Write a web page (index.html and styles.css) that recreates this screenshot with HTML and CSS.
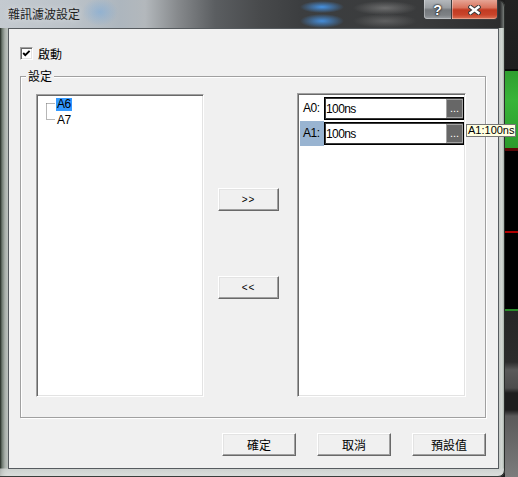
FILE: index.html
```html
<!DOCTYPE html>
<html>
<head>
<meta charset="utf-8">
<link rel="stylesheet" href="styles.css">
</head>
<body>
<div class="screen">
  <div class="window">
    <div class="titlebar">
      <span class="title">雜訊濾波設定</span>
      <div class="caption-buttons">
        <span class="cap-btn help">?</span>
        <span class="cap-btn close">
          <svg width="13" height="10" viewBox="0 0 13 10">
            <path d="M2.5 2 L10.5 8 M10.5 2 L2.5 8" stroke="#3a3a3a" stroke-width="4.4" stroke-linecap="square" fill="none"/>
            <path d="M2.5 2 L10.5 8 M10.5 2 L2.5 8" stroke="#ffffff" stroke-width="2.4" stroke-linecap="square" fill="none"/>
          </svg>
        </span>
      </div>
    </div>
    <div class="frame-body">
      <div class="client">
        <div class="check-row">
          <span class="checkbox">
            <svg width="11" height="11" viewBox="0 0 11 11">
              <path d="M2.2 5 L4.3 7.1 L8.6 2.8" stroke="#000" stroke-width="1.9" fill="none"/>
            </svg>
          </span>
          <span class="cjk check-label">啟動</span>
        </div>
        <div class="group">
          <span class="cjk group-label">設定</span>
          <div class="tree">
            <svg class="tree-lines" width="18" height="32" viewBox="0 0 18 32">
              <path d="M8.5 6.5 V22.5 M8.5 6.5 H17 M8.5 22.5 H17" stroke="#6e6e6e" stroke-width="1" stroke-dasharray="1 1" fill="none"/>
            </svg>
            <div class="tree-nodes">
              <div class="node"><span class="node-text selected">A6</span></div>
              <div class="node"><span class="node-text">A7</span></div>
            </div>
          </div>
          <div class="mid">
            <button class="btn btn-move">&gt;&gt;</button>
            <button class="btn btn-move">&lt;&lt;</button>
          </div>
          <div class="list">
            <div class="row">
              <span class="row-label">A0:</span>
              <div class="edit"><span class="edit-text">100ns</span><span class="dots">...</span></div>
            </div>
            <div class="row active">
              <span class="row-label">A1:</span>
              <div class="edit"><span class="edit-text">100ns</span><span class="dots">...</span></div>
              <span class="tooltip">A1:100ns</span>
            </div>
          </div>
        </div>
        <div class="footer">
          <button class="btn btn-footer cjk">確定</button>
          <button class="btn btn-footer cjk">取消</button>
          <button class="btn btn-footer cjk">預設值</button>
        </div>
      </div>
    </div>
  </div>
  <div class="backdrop"></div>
</div>
</body>
</html>
```

FILE: styles.css
```css
html, body {
  margin: 0;
  padding: 0;
  background: #1e1e1e;
  overflow: hidden;
}

body {
  font-family: "Liberation Sans", "Noto Sans CJK TC", sans-serif;
  font-size: 12px;
  color: #000;
}

.cjk {
  font-family: "Noto Sans CJK TC", "Liberation Sans", sans-serif;
  font-size: 12px;
}

.screen {
  display: flex;
  width: 518px;
  height: 477px;
}

.window {
  width: 505px;
  height: 477px;
  flex: none;
  display: flex;
  flex-direction: column;
  position: relative;
  z-index: 1;
}

.titlebar {
  height: 28px;
  flex: none;
  display: flex;
  align-items: flex-start;
  padding: 0 7px 0 8px;
  border-radius: 0 7px 0 0;
  box-shadow: inset -1px 0 0 #2a2d2b;
  background:
    radial-gradient(22px 6px at 322px 7px, rgba(70, 150, 235, 0.95), rgba(70, 150, 235, 0)),
    radial-gradient(22px 7px at 322px 21px, rgba(70, 150, 235, 0.9), rgba(70, 150, 235, 0)),
    radial-gradient(32px 7px at 385px 8px, rgba(150, 150, 150, 0.55), rgba(150, 150, 150, 0)),
    radial-gradient(32px 7px at 385px 21px, rgba(140, 140, 140, 0.45), rgba(140, 140, 140, 0)),
    radial-gradient(18px 14px at 100px 12px, rgba(120, 170, 220, 0.55), rgba(120, 170, 220, 0)),
    linear-gradient(to right, #c4cad0 0, #bcc3c9 70px, #adb6be 120px, #b3b8bc 145px, #86898c 178px, #5b5e61 215px, #484a4c 260px, #3c3e40 300px, #3a3b3c 420px, #2c2d2e 500px, #8a908c 505px);
}

.title {
  margin-top: 7px;
  line-height: 14px;
  font-family: "Noto Sans CJK TC", sans-serif;
  font-size: 12px;
  color: #1c1c1c;
  text-shadow: 0 0 6px rgba(255, 255, 255, 0.6);
}

.caption-buttons {
  margin-left: auto;
  display: flex;
  height: 20px;
}

.cap-btn {
  box-sizing: border-box;
  height: 20px;
  display: flex;
  align-items: center;
  justify-content: center;
  border: 1px solid #3a3c3e;
  border-top: none;
}

.help {
  width: 28px;
  border-radius: 0 0 0 4px;
  border-right: none;
  background: linear-gradient(to bottom, #b4b8bc 0, #9a9ea2 40%, #74787c 52%, #7e8286 80%, #9ea2a6 100%);
  box-shadow: inset 1px 0 0 rgba(255, 255, 255, 0.35), inset 0 -1px 0 rgba(255, 255, 255, 0.3);
  color: #fff;
  font-family: "Liberation Sans", sans-serif;
  font-weight: bold;
  font-size: 14px;
  line-height: 14px;
  text-shadow: 0 0 1px #222, 0 0 2px #222, 0 0 2px #333;
}

.close {
  width: 47px;
  border-radius: 0 0 4px 0;
  background: linear-gradient(to bottom, #e6a595 0, #d9735d 40%, #c23b22 52%, #c9442a 78%, #dc7358 100%);
  box-shadow: inset 1px 0 0 rgba(255, 255, 255, 0.35), inset 0 -1px 0 rgba(255, 220, 200, 0.4);
}

.close svg {
  display: block;
}

.frame-body {
  flex: 1;
  display: flex;
  padding: 0 6px 8px 8px;
  border-radius: 0 0 7px 0;
  box-shadow: inset -1px 0 0 #2a2d2b, inset 0 -1px 0 #3a3d3b;
  background:
    linear-gradient(to bottom, rgba(255, 255, 255, 0) 0, rgba(255, 255, 255, 0) 440px, rgba(210, 214, 212, 0.8) 441px, rgba(225, 228, 226, 0.8) 448px),
    linear-gradient(to right, #1f2720 0, #6d786f 2px, #a9b0ab 5px, #bcc2be 8px, #c3c8c5 calc(100% - 6px), #d3d9d4 calc(100% - 3px), #8e9991 100%);
}

.client {
  flex: 1;
  box-sizing: border-box;
  display: flex;
  flex-direction: column;
  background: #f0f0f0;
  border: 1px solid #565b5f;
}

.check-row {
  display: flex;
  align-items: center;
  gap: 5px;
  margin: 18px 0 0 11px;
  height: 13px;
}

.checkbox {
  box-sizing: border-box;
  width: 13px;
  height: 13px;
  background: #fff;
  border: 1px solid;
  border-color: #a0a0a0 #ffffff #ffffff #a0a0a0;
  box-shadow: inset 1px 1px 0 #696969, inset -1px -1px 0 #e3e3e3;
  display: flex;
  align-items: center;
  justify-content: center;
}

.checkbox svg {
  display: block;
}

.check-label {
  line-height: 13px;
}

.group {
  position: relative;
  box-sizing: border-box;
  width: 466px;
  height: 342px;
  margin: 16px 0 0 11px;
  padding: 16px 19px 20px 15px;
  border: 1px solid #a0a0a0;
  box-shadow: inset 1px 1px 0 #ffffff, 1px 1px 0 #ffffff;
  display: flex;
  align-items: flex-start;
}

.group-label {
  position: absolute;
  top: -8px;
  left: 5px;
  padding: 0 2px;
  line-height: 14px;
  background: #f0f0f0;
}

.tree,
.list {
  box-sizing: border-box;
  background: #fff;
  border: 1px solid;
  border-color: #a0a0a0 #ffffff #ffffff #a0a0a0;
  box-shadow: inset 1px 1px 0 #696969, inset -1px -1px 0 #e3e3e3;
}

.tree {
  width: 168px;
  height: 303px;
  margin-top: 1px;
  padding: 2px 0 0 1px;
  display: flex;
  align-items: flex-start;
}

.tree-lines {
  display: block;
  flex: none;
}

.tree-nodes {
  display: flex;
  flex-direction: column;
}

.node {
  height: 16px;
}

.node-text {
  display: inline-block;
  height: 13px;
  line-height: 13px;
  padding: 0 1px;
  font-size: 12px;
  letter-spacing: -0.5px;
}

.node-text.selected {
  background: #3399ff;
}

.mid {
  width: 61px;
  flex: none;
  margin: 0 18px 0 14px;
  padding-top: 95px;
  display: flex;
  flex-direction: column;
  gap: 65px;
}

.btn {
  box-sizing: border-box;
  height: 23px;
  padding: 0;
  margin: 0;
  background: #f0f0f0;
  border: 1px solid;
  border-color: #ffffff #696969 #696969 #ffffff;
  box-shadow: inset -1px -1px 0 #a0a0a0, inset 1px 1px 0 #e3e3e3;
  color: #000;
  border-radius: 0;
}

.btn-move {
  width: 61px;
  font-family: "Liberation Sans", sans-serif;
  font-size: 10px;
  letter-spacing: 1px;
}

.list {
  width: 169px;
  height: 304px;
  padding: 2px 1px 0 2px;
  display: flex;
  flex-direction: column;
}

.row {
  position: relative;
  height: 25px;
  display: flex;
  align-items: flex-start;
}

.row-label {
  box-sizing: border-box;
  width: 24px;
  height: 25px;
  padding-left: 3px;
  line-height: 24px;
  font-size: 12px;
  letter-spacing: -0.5px;
}

.row.active .row-label {
  background: #99b4d1;
}

.edit {
  box-sizing: border-box;
  width: 140px;
  height: 23px;
  margin-top: 1px;
  border: 1px solid #000;
  box-shadow: inset 0 0 0 1px #3a3a3a;
  background: #fff;
  padding-left: 1px;
  display: flex;
  align-items: center;
}

.edit-text {
  font-size: 12px;
  letter-spacing: -0.6px;
}

.dots {
  box-sizing: border-box;
  margin-left: auto;
  width: 17px;
  height: 19px;
  background: #676767;
  border: 1px solid #a3a3a3;
  color: #fff;
  font-size: 11px;
  line-height: 11px;
  display: flex;
  align-items: flex-end;
  justify-content: center;
  padding-bottom: 3px;
}

.tooltip {
  position: absolute;
  left: 166px;
  top: 3px;
  z-index: 5;
  height: 13px;
  box-sizing: border-box;
  padding: 0 1px 0 1px;
  border: 1px solid #767676;
  background: #ffffe1;
  font-size: 11px;
  line-height: 11px;
  white-space: nowrap;
}

.footer {
  display: flex;
  justify-content: flex-end;
  gap: 21px;
  margin-top: 15px;
  padding-right: 12px;
}

.btn-footer {
  width: 74px;
}

.backdrop {
  flex: 1;
  height: 477px;
  background: linear-gradient(to bottom,
    #222222 0, #1e1e1e 69px, #0a0a0a 69px, #0a0a0a 71px,
    #2f9e2f 71px, #38b438 100px, #2c9a2c 148px,
    #5a0808 148px, #5a0808 151px, #000 151px,
    #000 231px, #b00000 231px, #b00000 233px, #000 233px,
    #000 309px, #2a8a2a 309px, #2a8a2a 311px,
    #262626 311px, #2c2c2c 362px, #5a5a5a 370px, #4c4c4c 388px,
    #1e1e1e 393px, #1e1e1e 410px, #5a5a5a 416px, #7c7c7c 477px);
}
```
